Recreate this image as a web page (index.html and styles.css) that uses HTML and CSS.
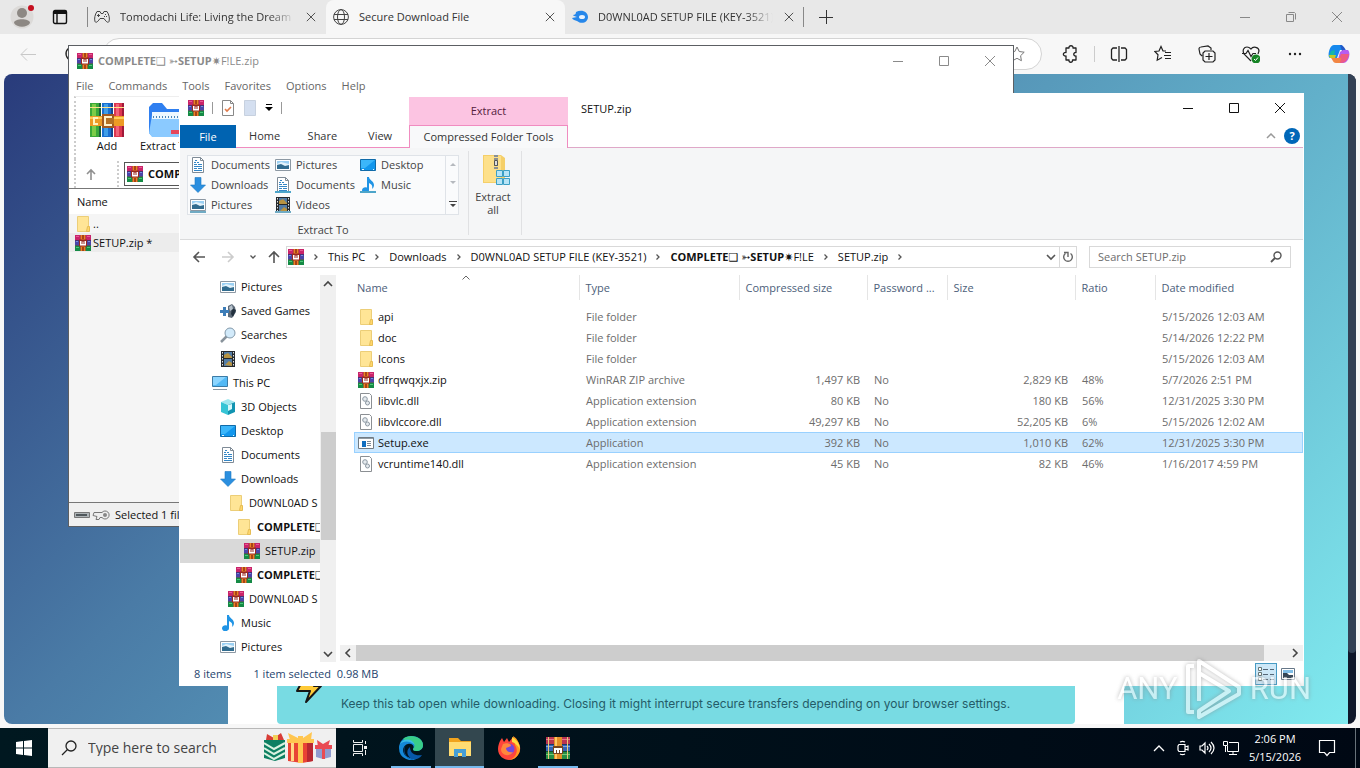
FILE: index.html
```html
<!DOCTYPE html>
<html lang="en">
<head>
<meta charset="UTF-8">
<meta name="viewport" content="width=device-width, initial-scale=1.0">
<title>Desktop</title>
<link rel="stylesheet" href="styles.css">
</head>
<body>

<!-- shared icons -->
<svg class="sprite" aria-hidden="true">
    <symbol id="winrar" viewBox="0 0 16 16">
        <path fill="#c8246a" d="M0 0h16v5H0z"/><path fill="#4a45a8" d="M0 5h16v5.500H0z"/><path fill="#158a45" d="M0 10.500h16V16H0z"/>
        <path fill="#e85a93" d="M1 1h3v1H1zM12 1h3v1h-3z"/><path fill="#7a8ee0" d="M1 6h2v1H1zM13 6h2v1h-2z"/><path fill="#4dc676" d="M1 12h3v1H1zM12 12h3v1h-3z"/>
        <path fill="#4d1838" d="M0 5h16v.5H0zM0 10h16v.5H0zM5 0h.5v16H5zM10.500 0h.5v16h-.5z"/>
        <path fill="#ee8124" d="M5.500 0h5v16h-5z"/><path fill="#a74318" d="M7 0h2v4H7zM7 12h2v4H7z"/>
        <path fill="#9a2820" d="M4 4.500h8v7H4z"/><path fill="#fff" d="M5 6h1.500v3h1V6.500h1V9h1V6H11v4.500H5z"/>
    </symbol>
    <symbol id="folder" viewBox="0 0 16 16"><path fill="#ffe596" stroke="#ecce78" d="M2.500.5h11v15h-11z"/><path fill="#ffd76c" stroke="#e6bd55" d="M12.500 10.500h2v5h-3z"/></symbol>
    <symbol id="doc" viewBox="0 0 16 16"><path fill="#fff" stroke="#7f8b96" d="M2.500.5h8l3 3v12h-11z"/><path fill="none" stroke="#7f8b96" d="M10.500.5v3h3"/><path stroke="#3386c6" d="M4 5.500h2M7 5.500h2M5 3.500h2M4 7.500h3M8 7.500h4M4 9.500h8M4 11.500h3M8 11.500h4M4 13.500h8"/></symbol>
    <symbol id="download" viewBox="0 0 16 16"><path fill="#2b8fdf" stroke="#1c78c2" stroke-width=".6" d="M5 .5h6V8h4.500L8 15.500.5 8H5z"/></symbol>
    <symbol id="picture" viewBox="0 0 16 16"><path fill="#fff" stroke="#8c98a3" d="M.5 2.500h15v11H.5z"/><path fill="#9bd0f3" d="M2 4h12v8H2z"/><path fill="#e4f3fb" d="M2 7l4-2 8 2v2H2z"/><path fill="#316c8f" d="M2 8l4-1 4 2 4-1v4H2z"/></symbol>
    <symbol id="video" viewBox="0 0 16 16"><path fill="#25292d" d="M1 0h14v16H1z"/><path fill="#527ca6" d="M4 1h8v6H4zM4 8h8v7H4z"/><path fill="#b89442" d="M4 4l4-2 4 4v1H4zM5 14l4-4 3 2v3z"/><path stroke="#dfe4e7" stroke-dasharray="1.500 1.500" d="M2.500 1v14M13.500 1v14"/></symbol>
    <symbol id="screen" viewBox="0 0 16 16"><path fill="#1297ed" stroke="#106ba9" d="M.5 2.500h15v11H.5z"/><path fill="#3bb6fa" d="M1 3h14L5 11H1z"/><path stroke="#e8f7ff" d="M2 12.500h2M13 12.500h1"/></symbol>
    <symbol id="music" viewBox="0 0 16 16"><path fill="#2094e5" d="M7 0h2c0 3 5 4 5 8 0 2-1 3-2 4 1-4-1-5-3-6v7a3.500 3 0 1 1-2-2.500z"/></symbol>
    <symbol id="games" viewBox="0 0 16 16"><path fill="#5e6b79" d="M8 3l4-2 3 3 1 5-4 6-4-1z"/><path fill="#22303e" d="M12 5l4 2-3 7-2-3z"/><path fill="#b7c2cc" d="M9 4l3-2 1 4-3 2z"/><path fill="#3d7db8" d="M3 4h3v3h3v3H6v3H3v-3H0V7h3z"/></symbol>
    <symbol id="loupe" viewBox="0 0 16 16"><path stroke="#89939c" stroke-width="2.500" d="M1 15l6-6"/><circle cx="10" cy="6" r="5" fill="#d2eafa" stroke="#8399aa"/></symbol>
    <symbol id="pc" viewBox="0 0 16 16"><path fill="#53b9f5" stroke="#3c7ba5" d="M.5 1.500h15v10H.5z"/><path fill="#8bd5ff" d="M1 2h13L4 10H1z"/><path stroke="#8998a4" d="M1 14.500h14"/></symbol>
    <symbol id="cube" viewBox="0 0 16 16"><path fill="#a1e7ef" d="M8 0l7 3-7 3-7-3z"/><path fill="#36c4d5" d="M1 3l7 3v10l-7-3z"/><path fill="#1194b1" d="M15 3L8 6v10l7-3z"/><path fill="#d7f8fa" d="M8 6l4-1v5l-4 2z"/></symbol>
    <symbol id="dll" viewBox="0 0 16 16"><path fill="#fff" stroke="#8b8f93" d="M2.500.5h9l2 2v13h-11z"/><circle cx="7" cy="6" r="2.300" fill="#e5eaee" stroke="#8c98a2"/><circle cx="9.500" cy="10" r="2" fill="#e5eaee" stroke="#8c98a2"/></symbol>
    <symbol id="exe" viewBox="0 0 16 16"><path fill="#fff" stroke="#707b84" d="M.5 2.500h15v11H.5z"/><path fill="#8f9aa3" d="M1 3h14v1H1z"/><path fill="#126fc0" d="M4 6h4v6H4z"/><path stroke="#7d8a95" d="M9 6.500h4M9 8.500h4M9 10.500h4"/></symbol>
    <symbol id="min" viewBox="0 0 12 12"><path stroke="currentColor" d="M1 6.500h10"/></symbol>
    <symbol id="max" viewBox="0 0 12 12"><path fill="none" stroke="currentColor" d="M1.500 1.500h9v9h-9z"/></symbol>
    <symbol id="close" viewBox="0 0 12 12"><path stroke="currentColor" d="M1 1l10 10M11 1L1 11"/></symbol>
    <symbol id="left" viewBox="0 0 16 16"><path fill="none" stroke="currentColor" stroke-width="1.600" d="M14 8H3m5-5L3 8l5 5"/></symbol>
    <symbol id="chev" viewBox="0 0 8 8"><path fill="none" stroke="currentColor" stroke-width="1.300" d="M2.500 1.500L5 4 2.500 6.500"/></symbol>
    <symbol id="edge" viewBox="0 0 24 24">
        <path fill="#1488d8" d="M0 12A12 12 0 0 1 12 0c8 0 12 5 12 9 0 4-3 6-7 6-2 0-3-1-3-2 2-3-1-6-5-5-5 1-7 8-2 12 4 3 9 3 13 1A12 12 0 0 1 0 12z"/>
        <path fill="#39cd88" d="M4 3c7-6 20-2 20 6 0 4-3 6-7 6-2 0-3-1-3-2 4-4-1-10-7-9-1 0-2 0-3-1z"/><path fill="#39bde5" d="M1 8C4 2 13 2 16 9 10 4 4 5 1 8z"/><path fill="#0758a9" d="M7 9c-5 5-1 14 7 15-8-5-6-11-3-13 0 7 6 9 12 8-3 5-9 5-13 3-5-3-6-9-3-13z"/>
    </symbol>
    <symbol id="books" viewBox="0 0 34 34">
        <path fill="#3aa83a" d="M0 0h11v34H0z"/><path fill="#1a6fd0" d="M12 0h11v34H12z"/><path fill="#dc3750" d="M24 0h10v34H24z"/>
        <path fill="#7ccc48" d="M2 1h4v32H2z"/><path fill="#3f9ee8" d="M14 1h4v32h-4z"/><path fill="#f2637a" d="M26 1h3v32h-3z"/>
        <path fill="#195e3c" d="M9 0h2v34H9z"/><path fill="#17458d" d="M21 0h2v34h-2z"/><path fill="#a01939" d="M32 0h2v34h-2z"/><path fill="#ffe18a" d="M0 4h11v1H0zM12 4h11v1H12zM24 4h10v1H24z"/>
        <path fill="#ed9b25" d="M0 13h34v10H0z"/><path fill="#ffce5b" d="M0 14h34v2H0z"/><path fill="#a35a20" d="M12 11h12v14H12z"/><path fill="#fff1c7" d="M14 13h8v10h-8z"/><path fill="#b57225" d="M16 15h8v6h-8z"/><path fill="none" stroke="#fff2be" stroke-width="2" d="M8 15H4v6h4"/>
    </symbol>
    <symbol id="books-flat" viewBox="0 0 24 22">
        <path fill="#b93452" d="M0 0h24v7H0z"/><path fill="#3563b5" d="M0 7.500h24v6.500H0z"/><path fill="#258f45" d="M0 14.500h24V22H0z"/>
        <path fill="#e4788c" d="M0 2h24v1H0z"/><path fill="#78a6e4" d="M0 9h24v1H0z"/><path fill="#75c978" d="M0 17h24v1H0z"/><path fill="#e8c877" d="M2 0h1v22H2zM21 0h1v22h-1z"/>
        <path fill="#e38f27" d="M8 0h8v22H8z"/><path fill="#ffc562" d="M9 0h2v22H9z"/><path fill="#754420" d="M7 9h10v8H7z"/><path fill="#fff" d="M8 11h8v5h-2v-3h-1v3h-2v-3h-1v3H8z"/>
    </symbol>
</svg>

<div class="desktop">

    <!-- browser -->
    <div class="browser">
        <div class="tabstrip">
            <button class="profile" aria-label="Profile"><svg width="24" height="24" viewBox="0 0 24 24"><circle cx="12" cy="12" r="11.500" fill="#dcdad8"/><circle cx="12" cy="8" r="5" fill="#8d8883"/><path fill="#8d8883" d="M4 18c0-5 16-5 16 0-3 5-13 5-16 0z"/><circle cx="21" cy="3" r="3" fill="#c50f1f"/></svg></button>
            <button class="workspace" aria-label="Workspaces"><svg width="16" height="16" viewBox="0 0 16 16"><path fill="none" stroke="#111" stroke-width="1.400" d="M3 1.500h10a1.500 1.500 0 0 1 1.500 1.500v10a1.500 1.500 0 0 1-1.500 1.500H3A1.500 1.500 0 0 1 1.500 13V3A1.500 1.500 0 0 1 3 1.500zM5 5v9"/><path fill="#111" d="M1.500 2h13v3h-13z"/></svg></button>
            <div class="tab first">
                <svg width="16" height="16" viewBox="0 0 16 16"><path fill="none" stroke="#444" d="M3 2.500h3l1 2h2l1-2h3c2 3 3 7 2 10-1 2-3 0-5-3H6c-2 3-4 5-5 3C0 9.500 1 5.500 3 2.500zM3 6.500h3M4.500 5v3"/><path stroke="#444" d="M11 5.500h1M12 7.500h1M10 7.500h1"/></svg>
                <span class="tab-title fade">Tomodachi Life: Living the Dream</span>
                <button class="tab-close" aria-label="Close tab"><svg width="10" height="10"><use href="#close"/></svg></button>
            </div>
            <div class="tab active">
                <svg width="16" height="16" viewBox="0 0 16 16"><g fill="none" stroke="#444"><circle cx="8" cy="8" r="7.400"/><ellipse cx="8" cy="8" rx="3.500" ry="7.400"/><path d="M1 5.500h14M1 10.500h14"/></g></svg>
                <span class="tab-title">Secure Download File</span>
                <button class="tab-close" aria-label="Close tab"><svg width="10" height="10"><use href="#close"/></svg></button>
            </div>
            <div class="tab last">
                <svg width="16" height="16" viewBox="0 0 16 16"><path fill="#2687ea" d="M4 3c6-3 12 0 12 5s-6 8-11 4C3 11 1 11 0 9l5-1C3 7 1 7 1 6c2 0 3-1 3-3z"/><ellipse cx="10" cy="8" rx="3" ry="2" fill="#e8f3ff"/></svg>
                <span class="tab-title fade">D0WNL0AD SETUP FILE (KEY-3521)</span>
                <button class="tab-close" aria-label="Close tab"><svg width="10" height="10"><use href="#close"/></svg></button>
            </div>
            <button class="new-tab" aria-label="New tab"><svg width="14" height="14" viewBox="0 0 14 14"><path stroke="#333" d="M7.500 0v14M0 7.500h14"/></svg></button>
            <div class="controls dim">
                <button aria-label="Minimize"><svg width="12" height="12"><use href="#min"/></svg></button>
                <button aria-label="Restore"><svg width="12" height="12" viewBox="0 0 12 12"><path fill="none" stroke="currentColor" d="M1.500 3.500h7v7h-7zM3.500 1.500h6l1 1v6"/></svg></button>
                <button aria-label="Close"><svg width="12" height="12"><use href="#close"/></svg></button>
            </div>
        </div>
        <div class="toolbar">
            <button class="nav-back" aria-label="Back"><svg width="18" height="18" viewBox="0 0 18 18"><path fill="none" stroke="#c8c8c8" d="M17 9.500H2m6-6l-6 6 6 6"/></svg></button>
            <button class="nav-reload" aria-label="Refresh"><svg width="18" height="18" viewBox="0 0 18 18"><path fill="none" stroke="#222" stroke-width="1.300" d="M15 5a7 7 0 1 0 1 4M15 1v4h-4"/></svg></button>
            <div class="omnibox">
                <input type="text" aria-label="Address">
                <button aria-label="Add to favorites"><svg width="16" height="16" viewBox="0 0 16 16"><path fill="none" stroke="#777" d="M8 1l2.200 4.500 5 .7-3.600 3.500.8 5L8 12.300l-4.400 2.400.8-5L.8 6.200l5-.7z"/></svg></button>
            </div>
            <div class="tools">
                <button aria-label="Extensions"><svg width="18" height="18" viewBox="0 0 18 18"><path fill="none" stroke="#222" stroke-width="1.300" stroke-linejoin="round" d="M5 3h3c-.5-3 4.500-3 4 0h3v4.500c-3-.5-3 4 0 3.500v4h-3.500c.5 3-4 3-3.500 0H5v-4c-3.500.5-3.500-4 0-3.500z"/></svg></button>
                <span class="line"></span>
                <button aria-label="Split screen"><svg width="18" height="18" viewBox="0 0 18 18"><path fill="none" stroke="#222" stroke-width="1.300" d="M7 3H3L1.500 4.500v9L3 15h4M11 3h4l1.500 1.500v9L15 15h-4M9 1v16"/></svg></button>
                <button aria-label="Favorites"><svg width="18" height="18" viewBox="0 0 18 18"><path fill="none" stroke="#222" stroke-width="1.200" d="M12 6H9L7 1.500 5 6 .8 6.500 4 9.800l-.8 5.400L8 12.500M11 7.500h6M10 10.500h7M11 13.500h6"/></svg></button>
                <button aria-label="Collections"><svg width="18" height="18" viewBox="0 0 18 18"><path fill="none" stroke="#222" stroke-width="1.200" d="M4 11L2 9 1 4c0-1 1-2 2-2l7-1 3 2v2M7 6h8l2 2v7l-2 2H7l-2-2V8zM11 8v7M7.500 11.500h7"/></svg></button>
                <button aria-label="Browser essentials"><svg width="18" height="18" viewBox="0 0 18 18"><path fill="none" stroke="#222" stroke-width="1.200" d="M9 16L2 9C0 5 2 2 5 2c2 0 3 1 4 2 2-3 8-2 8 2l-1 3M0 8.500h4l2-3 3 6 2-3h3"/><circle cx="14" cy="14" r="4.500" fill="#178526"/><path fill="none" stroke="#fff" d="M12 14l1.500 1.500L16 12.500"/></svg></button>
                <button aria-label="Settings and more"><svg width="16" height="16" viewBox="0 0 16 16"><g fill="#222"><circle cx="3" cy="8" r="1.200"/><circle cx="8" cy="8" r="1.200"/><circle cx="13" cy="8" r="1.200"/></g></svg></button>
                <button class="copilot" aria-label="Copilot"><svg width="22" height="20" viewBox="0 0 22 20"><path fill="#1689ed" d="M6 1h8l2 5h-4L9 14H2C-1 14 1 1 6 1z"/><path fill="#18b7a6" d="M3 7l4-1-1 7H1z"/><path fill="#c4c927" d="M1 11h7l-1 3H2z"/><path fill="#2459c8" d="M12 1c5 0 5 6 7 6h-5z"/><path fill="#b75cf0" d="M15 6h5c3 3 1 13-5 13H9l3-11z"/><path fill="#ed5b84" d="M13 10h8c-1 6-4 9-8 9H9z"/><path fill="#f28643" d="M7 14h6l-1 5H8c-3 0-3-3-5-5z"/></svg></button>
            </div>
        </div>
        <div class="page">
            <div class="page-body">
                <div class="card">
                    <div class="note">
                        <svg class="bolt" width="28" height="30" viewBox="0 0 28 30"><path fill="#ffca37" stroke="#161616" stroke-width="2" stroke-linejoin="round" d="M10 2h14l-5 10h7L11 28l4-11H2z"/></svg>
                        <p>Keep this tab open while downloading. Closing it might interrupt secure transfers depending on your browser settings.</p>
                    </div>
                </div>
            </div>
            <div class="page-scroll"><span></span></div>
        </div>
    </div>

    <!-- archive manager -->
    <div class="window archive">
        <div class="archive-title">
            <svg width="16" height="16"><use href="#winrar"/></svg>
            <span><b>COMPLETE❑ ➳SETUP✷</b>F!LE.zip</span>
            <div class="controls">
                <button aria-label="Minimize"><svg width="12" height="12"><use href="#min"/></svg></button>
                <button aria-label="Maximize"><svg width="12" height="12"><use href="#max"/></svg></button>
                <button aria-label="Close"><svg width="12" height="12"><use href="#close"/></svg></button>
            </div>
        </div>
        <div class="archive-menu">
            <button>File</button><button>Commands</button><button>Tools</button><button>Favorites</button><button>Options</button><button>Help</button>
        </div>
        <div class="archive-tools">
            <button><svg width="34" height="34"><use href="#books"/></svg>Add</button>
            <button><svg width="34" height="34" viewBox="0 0 34 34"><path fill="#2f7ff0" d="M0 4l4-4h9l5 6h16v28H4l-4-4z"/><path fill="#8bcaff" d="M3 12h31v22H3l-3-4z"/><path fill="#eef8ff" d="M3 9h31v7H3z"/><path stroke="#4c87b8" stroke-width="2" stroke-dasharray="1 2" d="M4 14h30"/><path fill="#e4475b" d="M22 27h12v4H22z"/></svg>Extract To</button>
        </div>
        <div class="archive-path">
            <button class="up" aria-label="Up"><svg width="12" height="12" viewBox="0 0 12 12"><path fill="none" stroke="#909090" stroke-width="1.600" d="M6 12V2M2 6l4-4 4 4"/></svg></button>
            <div class="path-box"><svg width="16" height="16"><use href="#winrar"/></svg><b>COMPLETE❑</b></div>
        </div>
        <div class="archive-list">
            <div class="archive-head">Name</div>
            <div class="archive-row"><svg width="16" height="16"><use href="#folder"/></svg>..</div>
            <div class="archive-row picked"><svg width="16" height="16"><use href="#winrar"/></svg>SETUP.zip *</div>
        </div>
        <div class="archive-status">
            <svg width="38" height="14" viewBox="0 0 38 14"><path fill="#aeb4b7" stroke="#777" d="M1.500 4.500h15v5h-15z"/><path fill="#50585c" d="M3 6h11v2H3z"/><path fill="#eee" stroke="#777" d="M21 4.500h8a4 4 0 1 1 0 5h-2l-1 2h-3l1-3-4-1z"/><circle cx="32" cy="7" r="2" fill="#888"/></svg>
            <span>Selected 1 file</span>
        </div>
    </div>

    <!-- file explorer -->
    <div class="window explorer">
        <div class="titlebar">
            <div class="quick">
                <svg width="16" height="16"><use href="#winrar"/></svg>
                <i></i>
                <button aria-label="Properties"><svg width="14" height="16" viewBox="0 0 14 16"><path fill="#fff" stroke="#888" d="M1.500.5h8l3 3v12h-11z"/><path fill="none" stroke="#888" d="M9.500.5v3h3"/><path fill="none" stroke="#e07a4a" stroke-width="1.600" d="M4 9l2 2 4-4"/></svg></button>
                <button aria-label="New folder"><svg width="14" height="16" viewBox="0 0 14 16"><path fill="#d4dff0" stroke="#c7d1df" d="M1.500.5h11v15h-11z"/></svg></button>
                <button class="more" aria-label="Customize"><svg width="8" height="8" viewBox="0 0 8 8"><path d="M1 0h6v1H1zM0 3h8L4 7z"/></svg></button>
                <i></i>
            </div>
            <div class="context">Extract</div>
            <div class="title">SETUP.zip</div>
            <div class="controls">
                <button aria-label="Minimize"><svg width="12" height="12"><use href="#min"/></svg></button>
                <button aria-label="Maximize"><svg width="12" height="12"><use href="#max"/></svg></button>
                <button aria-label="Close"><svg width="12" height="12"><use href="#close"/></svg></button>
            </div>
        </div>
        <div class="tabs">
            <div class="tabs-left">
                <button class="file">File</button>
                <button>Home</button>
                <button>Share</button>
                <button>View</button>
            </div>
            <button class="tools-tab">Compressed Folder Tools</button>
            <div class="help">
                <svg width="10" height="6" viewBox="0 0 10 6"><path fill="none" stroke="#999" stroke-width="1.500" d="M1 5l4-4 4 4"/></svg>
                <button aria-label="Help">?</button>
            </div>
        </div>
        <div class="ribbon">
            <div class="group">
                <div class="gallery">
                    <div class="places">
                        <button><svg width="16" height="16"><use href="#doc"/></svg>Documents</button>
                        <button><svg width="16" height="16"><use href="#picture"/></svg>Pictures</button>
                        <button><svg width="16" height="16"><use href="#screen"/></svg>Desktop</button>
                        <button><svg width="16" height="16"><use href="#download"/></svg>Downloads</button>
                        <button><svg width="16" height="16"><use href="#doc"/><path stroke="#4da5ca" stroke-width="2" d="M0 15h16"/></svg>Documents</button>
                        <button><svg width="16" height="16"><use href="#music"/><path stroke="#4da5ca" stroke-width="2" d="M0 15h16"/></svg>Music</button>
                        <button><svg width="16" height="16"><use href="#picture"/><path stroke="#70abc4" stroke-width="2" d="M0 15h16"/></svg>Pictures</button>
                        <button><svg width="16" height="16"><use href="#video"/><path stroke="#70abc4" stroke-width="2" d="M0 15h16"/></svg>Videos</button>
                    </div>
                    <div class="spinner">
                        <svg width="6" height="4" viewBox="0 0 6 4"><path fill="#b5b9be" d="M0 4l3-3 3 3z"/></svg>
                        <svg width="6" height="4" viewBox="0 0 6 4"><path fill="#b5b9be" d="M0 0h6L3 3z"/></svg>
                        <svg width="8" height="8" viewBox="0 0 8 8"><path fill="#444" d="M0 1h8v1H0zM1 4h6L4 7z"/></svg>
                    </div>
                </div>
                <div class="group-name">Extract To</div>
            </div>
            <button class="extract-all">
                <svg width="28" height="32" viewBox="0 0 28 32"><path fill="#f5cf69" d="M0 1h18l4 3v25H0z"/><path fill="#fde08a" d="M1 2h17v26H1z"/><path stroke="#8b9093" stroke-width="4" stroke-dasharray="2 1" d="M13 1v15"/><path fill="#ddd" stroke="#555" d="M11.500 6.500h3v5h-3z"/><path fill="#b7e4f6" stroke="#3c9fc5" d="M13.500 16.500h6v6h-6zM20.500 16.500h6v6h-6zM13.500 24.500h6v6h-6zM20.500 24.500h6v6h-6z"/></svg>
                Extract<br>all
            </button>
        </div>
        <div class="navbar">
            <div class="arrows">
                <button aria-label="Back"><svg width="16" height="16"><use href="#left"/></svg></button>
                <button class="off" aria-label="Forward"><svg class="flip" width="16" height="16"><use href="#left"/></svg></button>
                <button class="small" aria-label="Recent locations"><svg class="down" width="8" height="8"><use href="#chev"/></svg></button>
                <button class="small" aria-label="Up"><svg class="down" width="16" height="16"><use href="#left"/></svg></button>
            </div>
            <div class="crumbs">
                <svg width="16" height="16"><use href="#winrar"/></svg>
                <svg class="sep" width="8" height="8"><use href="#chev"/></svg>
                <a href="#">This PC</a>
                <svg class="sep" width="8" height="8"><use href="#chev"/></svg>
                <a href="#">Downloads</a>
                <svg class="sep" width="8" height="8"><use href="#chev"/></svg>
                <a href="#">D0WNL0AD SETUP FILE (KEY-3521)</a>
                <svg class="sep" width="8" height="8"><use href="#chev"/></svg>
                <a href="#"><b>COMPLETE❑ ➳SETUP✷</b>F!LE</a>
                <svg class="sep" width="8" height="8"><use href="#chev"/></svg>
                <a href="#">SETUP.zip</a>
                <svg class="sep" width="8" height="8"><use href="#chev"/></svg>
                <div class="crumb-end">
                    <button aria-label="Previous locations"><svg width="10" height="8" viewBox="0 0 10 8"><path fill="none" stroke="#555" stroke-width="1.600" d="M1 2l4 4 4-4"/></svg></button>
                    <button class="reload" aria-label="Refresh"><svg width="12" height="12" viewBox="0 0 12 12"><path fill="none" stroke="#666" stroke-width="1.400" d="M8.500 2.500a4.300 4.300 0 1 1-5 0M2 1.500h4V6"/></svg></button>
                </div>
            </div>
            <div class="search">
                <input type="text" placeholder="Search SETUP.zip" aria-label="Search SETUP.zip">
                <svg width="12" height="12" viewBox="0 0 12 12"><circle cx="7.500" cy="4.500" r="3.500" fill="none" stroke="#555" stroke-width="1.400"/><path stroke="#555" stroke-width="1.800" d="M5 7l-4 4"/></svg>
            </div>
        </div>
        <div class="main">
            <nav class="tree">
                <a href="#" class="level1"><svg width="16" height="16"><use href="#picture"/></svg>Pictures</a>
                <a href="#" class="level1"><svg width="16" height="16"><use href="#games"/></svg>Saved Games</a>
                <a href="#" class="level1"><svg width="16" height="16"><use href="#loupe"/></svg>Searches</a>
                <a href="#" class="level1"><svg width="16" height="16"><use href="#video"/></svg>Videos</a>
                <a href="#" class="level0"><svg width="16" height="16"><use href="#pc"/></svg>This PC</a>
                <a href="#" class="level1"><svg width="16" height="16"><use href="#cube"/></svg>3D Objects</a>
                <a href="#" class="level1"><svg width="16" height="16"><use href="#screen"/></svg>Desktop</a>
                <a href="#" class="level1"><svg width="16" height="16"><use href="#doc"/></svg>Documents</a>
                <a href="#" class="level1"><svg width="16" height="16"><use href="#download"/></svg>Downloads</a>
                <a href="#" class="level2"><svg width="16" height="16"><use href="#folder"/></svg>D0WNL0AD S</a>
                <a href="#" class="level3"><svg width="16" height="16"><use href="#folder"/></svg><b>COMPLETE❑</b></a>
                <a href="#" class="level4 current"><svg width="16" height="16"><use href="#winrar"/></svg>SETUP.zip</a>
                <a href="#" class="level3"><svg width="16" height="16"><use href="#winrar"/></svg><b>COMPLETE❑</b></a>
                <a href="#" class="level2"><svg width="16" height="16"><use href="#winrar"/></svg>D0WNL0AD S</a>
                <a href="#" class="level1"><svg width="16" height="16"><use href="#music"/></svg>Music</a>
                <a href="#" class="level1"><svg width="16" height="16"><use href="#picture"/></svg>Pictures</a>
            </nav>
            <div class="vscroll">
                <svg width="10" height="16" viewBox="0 0 10 16"><path fill="none" stroke="#444" stroke-width="1.600" d="M1 11l4-4 4 4"/></svg>
                <span></span>
                <svg width="10" height="16" viewBox="0 0 10 16"><path fill="none" stroke="#444" stroke-width="1.600" d="M1 6l4 4 4-4"/></svg>
            </div>
            <div class="files">
                <table>
                    <colgroup><col class="c-name"><col class="c-type"><col class="c-size"><col class="c-short"><col class="c-size"><col class="c-short"><col></colgroup>
                    <thead>
                        <tr><th>Name<svg class="sort" width="8" height="5" viewBox="0 0 8 5"><path fill="none" stroke="#666" d="M.5 4.500L4 1l3.500 3.500"/></svg></th><th>Type</th><th>Compressed size</th><th>Password ...</th><th>Size</th><th>Ratio</th><th>Date modified</th></tr>
                    </thead>
                    <tbody>
                        <tr><td><svg width="16" height="16"><use href="#folder"/></svg>api</td><td>File folder</td><td></td><td></td><td></td><td></td><td>5/15/2026 12:03 AM</td></tr>
                        <tr><td><svg width="16" height="16"><use href="#folder"/></svg>doc</td><td>File folder</td><td></td><td></td><td></td><td></td><td>5/14/2026 12:22 PM</td></tr>
                        <tr><td><svg width="16" height="16"><use href="#folder"/></svg>Icons</td><td>File folder</td><td></td><td></td><td></td><td></td><td>5/15/2026 12:03 AM</td></tr>
                        <tr><td><svg width="16" height="16"><use href="#winrar"/></svg>dfrqwqxjx.zip</td><td>WinRAR ZIP archive</td><td class="num">1,497 KB</td><td>No</td><td class="num">2,829 KB</td><td>48%</td><td>5/7/2026 2:51 PM</td></tr>
                        <tr><td><svg width="16" height="16"><use href="#dll"/></svg>libvlc.dll</td><td>Application extension</td><td class="num">80 KB</td><td>No</td><td class="num">180 KB</td><td>56%</td><td>12/31/2025 3:30 PM</td></tr>
                        <tr><td><svg width="16" height="16"><use href="#dll"/></svg>libvlccore.dll</td><td>Application extension</td><td class="num">49,297 KB</td><td>No</td><td class="num">52,205 KB</td><td>6%</td><td>5/15/2026 12:02 AM</td></tr>
                        <tr class="selected"><td><svg width="16" height="16"><use href="#exe"/></svg>Setup.exe</td><td>Application</td><td class="num">392 KB</td><td>No</td><td class="num">1,010 KB</td><td>62%</td><td>12/31/2025 3:30 PM</td></tr>
                        <tr><td><svg width="16" height="16"><use href="#dll"/></svg>vcruntime140.dll</td><td>Application extension</td><td class="num">45 KB</td><td>No</td><td class="num">82 KB</td><td>46%</td><td>1/16/2017 4:59 PM</td></tr>
                    </tbody>
                </table>
                <div class="hscroll">
                    <svg width="16" height="10" viewBox="0 0 16 10"><path fill="none" stroke="#444" stroke-width="1.600" d="M10 1L6 5l4 4"/></svg>
                    <span></span>
                    <svg width="16" height="10" viewBox="0 0 16 10"><path fill="none" stroke="#444" stroke-width="1.600" d="M6 1l4 4-4 4"/></svg>
                </div>
            </div>
        </div>
        <div class="status">
            <span>8 items</span>
            <span>1 item selected&nbsp; 0.98 MB</span>
            <div class="views">
                <button class="on" aria-label="Details"><svg width="18" height="14" viewBox="0 0 18 14"><path fill="#fff" stroke="#677" d="M1.500.5h3v3h-3zM1.500 5.500h3v3h-3zM1.500 10.500h3v3h-3z"/><path stroke="#567" d="M6 2.500h5M6 7.500h5M6 12.500h5M13 2.500h4M13 7.500h4M13 12.500h4"/></svg></button>
                <button aria-label="Large icons"><svg width="14" height="12" viewBox="0 0 14 12"><path fill="#fff" stroke="#678" d="M.5.5h13v11H.5z"/><path fill="#7fbde6" d="M2 2h10v3H2z"/><path fill="#345" d="M2 5h4l2 2h4v3H2z"/></svg></button>
            </div>
        </div>
    </div>

    <div class="watermark">
        <span>ANY</span>
        <svg width="58" height="62" viewBox="0 0 58 62"><path fill="none" stroke="#fff" stroke-width="4" stroke-linejoin="round" d="M14 43V3l40 26v7L14 59v-6l30-20-30-18M9 8H3v46h6"/></svg>
        <span>RUN</span>
    </div>
</div>

<div class="taskbar">
    <button class="start" aria-label="Start"><svg width="16" height="16" viewBox="0 0 16 16"><path fill="#fff" d="M0 2l7-1v6.500H0zM8 1l8-1v7.500H8zM0 8.500h7V15l-7-1zM8 8.500h8V16l-8-1z"/></svg></button>
    <label class="task-search">
        <svg width="16" height="16" viewBox="0 0 16 16"><g fill="none" stroke="#222" stroke-width="1.300"><circle cx="10" cy="6" r="5"/><path d="M6.500 9.500L1 15"/></g></svg>
        <input type="text" placeholder="Type here to search">
        <svg width="68" height="34" viewBox="0 0 68 34"><path fill="#0d7f62" d="M0 9h21v18l-10 3-11-3z"/><path fill="none" stroke="#d9f1df" stroke-width="2" d="M0 12l10 6 11-6M0 17l10 6 11-6M0 22l10 6 11-6"/><path fill="#d83d37" d="M2 9l1-6 7 4 7-5 3 7z"/><path fill="#f2cf57" d="M9 4h5v5H9z"/><path fill="#e94334" d="M24 8h25v22l-11 2-14-2z"/><path fill="#ffc650" d="M34 5h5v27h-5zM23 8h27v4H23zM24 2l10 5h5l9-6-1 8H26z"/><path fill="#b82832" d="M43 12h6v18l-6 1z"/><path fill="#ffd785" d="M27 12h3v18h-3z"/><path fill="#8f9bd0" d="M52 16h15v10l-8 2-7-2z"/><path fill="#e94a53" d="M51 14h17v4H51zM53 9l6 4 7-4-2 7H54zM58 14h3v14h-3z"/></svg>
    </label>
    <button class="task-view" aria-label="Task View"><svg width="16" height="16" viewBox="0 0 16 16"><path fill="none" stroke="#eee" d="M1.500 4.500h9v7h-9zM1.500 0v2.500h9V0M1.500 16v-2.500h9V16M13.500 1v3M13.500 10v5"/><path fill="#eee" d="M12 6h3v3h-3z"/></svg></button>
    <button class="app running" aria-label="Microsoft Edge"><svg width="24" height="24"><use href="#edge"/></svg></button>
    <button class="app current" aria-label="File Explorer"><svg width="22" height="20" viewBox="0 0 22 20"><path fill="#f0a31d" d="M0 1h9l3 3h10v15H0z"/><path fill="#ffdc72" d="M0 5h22v14H0z"/><path fill="#459ed5" d="M5 12h12v8h-4v-4H9v4H5z"/></svg></button>
    <button class="app" aria-label="Firefox"><svg width="24" height="24" viewBox="0 0 24 24"><path fill="#ff453a" d="M3 5l2-3 2 4 3-4 2 4 4-5c4 3 8 7 7 13C22 20 17 24 12 24S1 20 1 13c0-3 1-6 2-8z"/><path fill="#ff9a1f" d="M16 0c5 3 7 8 7 14-1 6-6 10-11 10 7-2 10-9 6-15z"/><path fill="#ffdc41" d="M15 1c6 4 8 8 8 13-1-4-5-7-8-8z"/><circle cx="12" cy="13" r="5.500" fill="#7547dc"/><path fill="#ff873c" d="M6 8c4-2 8 0 8 2l-5 2c0 3 3 5 7 4-3 5-12 4-12-3z"/></svg></button>
    <button class="app running" aria-label="WinRAR"><svg width="24" height="22"><use href="#books-flat"/></svg></button>
    <div class="tray">
        <button aria-label="Show hidden icons"><svg width="12" height="8" viewBox="0 0 12 8"><path fill="none" stroke="#fff" stroke-width="1.300" d="M1 7l5-5 5 5"/></svg></button>
        <button aria-label="Meet Now"><svg width="14" height="16" viewBox="0 0 14 16"><path fill="none" stroke="#fff" stroke-width="1.200" d="M3 4.500h6v7H3L2 10V6zM9 7l3-1v4L9 9M4 2c2-1 3-1 5 0M4 14c2 1 3 1 5 0"/></svg></button>
        <button aria-label="Volume"><svg width="16" height="14" viewBox="0 0 16 14"><path fill="none" stroke="#fff" stroke-width="1.200" d="M1 5h2l3-3v10L3 9H1zM8 5q2 2 0 4M10 3q4 4 0 8M12 1q6 6 0 12"/></svg></button>
        <button aria-label="Network"><svg width="16" height="16" viewBox="0 0 16 16"><path fill="none" stroke="#fff" d="M6 2.500h9.500v9H4.500V6M.5 1.500h4v4h-4zM2.500 5.500V12M10 12v2.500M6 14.500h8"/></svg></button>
        <div class="clock"><span>2:06 PM</span><span>5/15/2026</span></div>
        <button class="notify" aria-label="Notifications"><svg width="18" height="18" viewBox="0 0 18 18"><path fill="none" stroke="#fff" stroke-width="1.200" d="M1.500 1.500h15v12h-5L9 16.500l-2.500-3h-5z"/></svg></button>
        <span class="peek"></span>
    </div>
</div>

</body>
</html>
```

FILE: styles.css
```css
* {
    box-sizing: border-box;
}

body {
    margin: 0;
    height: 100vh;
    display: flex;
    flex-direction: column;
    overflow: hidden;
    font-family: "Open Sans", "DejaVu Sans", sans-serif;
    font-size: 11px;
    line-height: 16px;
    color: #111;
    background: #f0eeee;
}

button,
input {
    font: inherit;
    color: inherit;
    border: 0;
    padding: 0;
    margin: 0;
    background: none;
}

input {
    min-width: 0;
    flex: 1;
    outline: none;
}

button {
    display: flex;
    align-items: center;
    justify-content: center;
}

a {
    color: inherit;
    text-decoration: none;
    white-space: nowrap;
}

svg {
    flex: none;
}

.sprite {
    position: absolute;
    width: 0;
    height: 0;
}

.desktop {
    position: relative;
    flex: 1;
    min-height: 0;
}

.controls {
    display: flex;
    margin-left: auto;
}

.controls button {
    width: 46px;
    height: 30px;
}

.dim {
    color: #888;
}

/* browser */
.browser {
    height: 100%;
    display: flex;
    flex-direction: column;
    background: #f7f7f7;
    padding-bottom: 4px;
}

.tabstrip {
    height: 34px;
    display: flex;
    align-items: center;
    background: #e8e8e8;
}

.profile {
    width: 44px;
}

.workspace {
    width: 32px;
    margin-right: 11px;
}

.tab {
    width: 239px;
    height: 34px;
    padding: 0 9px 0 7px;
    display: flex;
    align-items: center;
    gap: 10px;
    color: #333;
}

.tab.first,
.tab.last {
    background: linear-gradient(#888, #888) no-repeat left center / 1px 20px;
}

.tab.last {
    background-position: right center;
}

.tab.active {
    background: #f7f7f7;
    border-radius: 8px 8px 0 0;
}

.tab-title {
    flex: 1;
    overflow: hidden;
    white-space: nowrap;
}

.fade {
    mask-image: linear-gradient(to right, #000 85%, transparent);
}

.tab-close {
    width: 12px;
    height: 16px;
}

.new-tab {
    width: 44px;
}

.toolbar {
    height: 40px;
    display: flex;
    align-items: center;
}

.nav-back {
    width: 56px;
}

.nav-reload {
    width: 34px;
}

.omnibox {
    flex: 1;
    height: 32px;
    margin-left: 13px;
    margin-right: 6px;
    padding: 0 16px;
    display: flex;
    align-items: center;
    background: #fff;
    border: 1px solid #d4d4d4;
    border-radius: 16px;
}

.tools {
    display: flex;
    align-items: center;
}

.tools button {
    width: 44px;
}

.tools .copilot {
    width: 43px;
}

.line {
    width: 1px;
    height: 16px;
    margin: 0 2px;
    background: #ccc;
}

.page {
    flex: 1;
    min-height: 0;
    margin: 0 4px;
    display: flex;
    border-radius: 8px;
    overflow: hidden;
}

.page-body {
    flex: 1;
    display: flex;
    justify-content: center;
    background: linear-gradient(135deg, #293b7b, #4a7ba6 33%, #62b0ca 67%, #80eaef);
}

.card {
    width: 896px;
    padding: 0 49px;
    display: flex;
    align-items: flex-end;
    background: #fff;
    margin-top: 100px;
}

.note {
    flex: 1;
    height: 120px;
    padding: 0 16px 8px 18px;
    display: flex;
    align-items: flex-end;
    gap: 18px;
    background: #78dbe3;
    border-radius: 4px;
    font-family: Inter, sans-serif;
    font-size: 12px;
    line-height: 24px;
    color: #245b68;
}

.note p {
    margin: 0;
}

.bolt {
    margin-bottom: 12px;
}

.page-scroll {
    width: 8px;
    background: #0f172a;
}

.page-scroll span {
    display: block;
    height: 89%;
    background: #334155;
    border-radius: 0 0 4px 4px;
}

/* windows */
.window {
    position: absolute;
    display: flex;
    flex-direction: column;
    background: #fff;
}

.archive {
    left: 68px;
    top: 45px;
    right: 346px;
    height: 482px;
    border: 1px solid #5c5f63;
    color: #111;
}

.archive-title {
    height: 29px;
    padding-left: 8px;
    display: flex;
    align-items: center;
    gap: 5px;
    color: #8a8a8a;
}

.archive-menu {
    height: 21px;
    padding-left: 7px;
    display: flex;
    align-items: center;
    gap: 15px;
    color: #666;
}

.archive-tools {
    height: 63px;
    margin-left: 5px;
    padding-left: 10px;
    display: flex;
    gap: 12px;
    align-items: center;
    border-left: 2px dotted #ccc;
    border-top: 1px solid #eee;
}

.archive-tools button {
    min-width: 42px;
    flex-direction: column;
    white-space: nowrap;
    gap: 1px;
}

.archive-path {
    height: 29px;
    margin-left: 5px;
    display: flex;
    align-items: center;
    border-left: 2px dotted #ccc;
}

.archive-path .up {
    width: 43px;
    height: 26px;
    padding-right: 12px;
    border-right: 2px dotted #ccc;
}

.path-box {
    flex: 1;
    height: 24px;
    margin-left: 5px;
    padding-left: 2px;
    display: flex;
    align-items: center;
    gap: 5px;
    border: 1px solid #555;
}

.archive-list {
    flex: 1;
    background: #f5f5f5;
    border-top: 1px solid #777;
    border-bottom: 1px solid #777;
}

.archive-head {
    height: 25px;
    padding: 5px 8px;
    background: #fff;
}

.archive-row {
    height: 19px;
    padding-left: 6px;
    display: flex;
    align-items: center;
    gap: 2px;
}

.picked {
    background: #ececec;
}

.archive-status {
    height: 23px;
    padding-left: 4px;
    display: flex;
    align-items: center;
    background: #f0f0f0;
}

.archive-status span {
    margin-left: 4px;
}

/* explorer */
.explorer {
    left: 179px;
    top: 93px;
    right: 56px;
    bottom: 42px;
    border: solid #fff;
    border-width: 0 1px;
}

.titlebar {
    height: 32px;
    display: flex;
}

.quick {
    width: 229px;
    height: 30px;
    padding-left: 8px;
    display: flex;
    align-items: center;
    gap: 8px;
}

.quick i {
    width: 1px;
    height: 12px;
    background: #999;
}

.quick button {
    min-width: 14px;
}

.quick .more {
    min-width: 8px;
}

.context {
    width: 159px;
    margin-top: 4px;
    line-height: 28px;
    text-align: center;
    color: #54203c;
    background: #fcc4e2;
}

.title {
    margin-left: 13px;
    line-height: 32px;
}

.tabs {
    height: 23px;
    display: flex;
    color: #333;
}

.tabs-left {
    width: 229px;
    display: flex;
    border-bottom: 1px solid #f08cc0;
}

.tabs-left button {
    width: 58px;
}

.tabs-left .file {
    width: 56px;
    height: 23px;
    color: #fff;
    background: #0063b1;
}

.tools-tab {
    width: 159px;
    background: #f8f9fa;
    border: solid #f08cc0;
    border-width: 1px 1px 0;
}

.help {
    flex: 1;
    display: flex;
    align-items: center;
    justify-content: flex-end;
    gap: 8px;
    padding-right: 3px;
    border-bottom: 1px solid #dfa8c8;
}

.help button {
    width: 16px;
    height: 16px;
    border-radius: 50%;
    background: #0067b8;
    color: #fff;
    font-weight: bold;
}

.ribbon {
    height: 92px;
    display: flex;
    padding: 3px 0 4px;
    background: #f5f6f7;
    border-bottom: 1px solid #dadbdc;
    color: #444;
}

.group {
    padding: 4px 9px 0 7px;
    border-right: 1px solid #e0e1e3;
}

.gallery {
    width: 272px;
    height: 60px;
    display: flex;
    box-shadow: inset 0 0 0 1px #dfe3e8;
    background: #fafbfc;
}

.places {
    flex: 1;
    display: grid;
    grid-template-columns: repeat(3, 85px);
    grid-auto-rows: 20px;
    padding-left: 3px;
}

.places button {
    justify-content: flex-start;
    gap: 5px;
}

.spinner {
    width: 15px;
    display: flex;
    flex-direction: column;
    align-items: center;
    justify-content: space-around;
    border-left: 1px solid #dfe3e8;
}

.group-name {
    margin-top: 7px;
    text-align: center;
}

.extract-all {
    width: 53px;
    padding: 3px 4px 0 0;
    flex-direction: column;
    justify-content: flex-start;
    line-height: 13px;
    border-right: 1px solid #e0e1e3;
}

.extract-all svg {
    margin: 0 0 4px 8px;
}

.navbar {
    height: 35px;
    padding: 6px 12px 7px 11px;
    display: flex;
}

.arrows {
    width: 95px;
    display: flex;
    align-items: center;
    gap: 13px;
    color: #555;
}

.arrows .small {
    width: 8px;
}

.arrows .off {
    color: #ccc;
}

.flip {
    transform: scaleX(-1);
}

.down {
    transform: rotate(90deg);
}

.crumbs {
    flex: 1;
    height: 22px;
    margin-right: 12px;
    padding-left: 1px;
    display: flex;
    align-items: center;
    gap: 8px;
    border: 1px solid #d9d9d9;
}

.sep {
    color: #555;
}

.crumb-end {
    height: 20px;
    margin-left: auto;
    display: flex;
    gap: 3px;
}

.reload {
    width: 17px;
    border-left: 1px solid #d9d9d9;
}

.search {
    width: 202px;
    height: 22px;
    padding: 0 8px;
    display: flex;
    align-items: center;
    border: 1px solid #d9d9d9;
}

.search input::placeholder {
    color: #6d6d6d;
    opacity: 1;
}

.main {
    flex: 1;
    min-height: 0;
    display: flex;
}

.tree {
    width: 140px;
    overflow: hidden;
}

.tree a {
    height: 24px;
    display: flex;
    align-items: center;
    gap: 5px;
}

.level0 {
    padding-left: 32px;
}

.level1 {
    padding-left: 40px;
}

.level2 {
    padding-left: 48px;
}

.level3 {
    padding-left: 56px;
}

.level4 {
    padding-left: 64px;
}

.tree .current {
    background: #d9d9d9;
}

.vscroll {
    width: 16px;
    display: flex;
    flex-direction: column;
    align-items: center;
    background: #f0f0f0;
}

.vscroll span {
    width: 15px;
    height: 108px;
    margin: 141px 0 auto;
    background: #cdcdcd;
}

.files {
    flex: 1;
    min-width: 0;
    margin-left: 4px;
    display: flex;
    flex-direction: column;
    justify-content: space-between;
}

table {
    margin-left: 14px;
    table-layout: fixed;
    border-collapse: collapse;
    color: #6d6d6d;
}

.c-name {
    width: 225px;
}

.c-type {
    width: 160px;
}

.c-size {
    width: 128px;
}

.c-short {
    width: 80px;
}

th {
    position: relative;
    height: 25px;
    padding: 0 6px;
    font-weight: normal;
    text-align: left;
    white-space: nowrap;
    color: #4c607a;
    border-right: 1px solid #e5e5e5;
}

th:first-child {
    padding-left: 3px;
}

th:last-child {
    border-right: 0;
}

.sort {
    position: absolute;
    top: 0;
    left: 48%;
}

tbody::before {
    content: "";
    display: block;
    height: 6px;
}

td {
    height: 21px;
    padding: 0 7px;
    white-space: nowrap;
}

td:first-child {
    padding-left: 4px;
    color: #111;
}

td svg {
    margin-right: 4px;
    vertical-align: -4px;
}

.num {
    text-align: right;
}

.selected {
    background: #cce8ff;
    outline: 1px solid #99d1ff;
    outline-offset: -1px;
}

.hscroll {
    height: 16px;
    margin-bottom: 1px;
    display: flex;
    align-items: center;
    background: #f0f0f0;
}

.hscroll span {
    flex: 1;
    height: 16px;
    margin-right: 23px;
    background: #cdcdcd;
}

.status {
    height: 24px;
    padding: 0 4px 0 14px;
    display: flex;
    align-items: center;
    gap: 22px;
    color: #26446e;
}

.views {
    margin-left: auto;
    display: flex;
}

.views button {
    width: 22px;
    height: 22px;
}

.views .on {
    background: #cde8f8;
    border: 1px solid #489bc4;
}

.watermark {
    position: absolute;
    right: 49px;
    bottom: 8px;
    display: flex;
    align-items: center;
    gap: 7px;
    color: #fff;
    font-family: Roboto, sans-serif;
    font-size: 31px;
    line-height: 62px;
    opacity: 0.6;
    filter: drop-shadow(0 0 2px #888);
    pointer-events: none;
}

/* taskbar */
.taskbar {
    height: 40px;
    display: flex;
    color: #fff;
    background: linear-gradient(to right, #001820, #000814);
}

.start {
    width: 48px;
}

.task-search {
    width: 288px;
    padding: 0 4px 0 13px;
    display: flex;
    align-items: center;
    gap: 11px;
    font-size: 14px;
    color: #333;
    background: #f0f0f0;
    border: solid #b8b8b8;
    border-width: 1px 0;
}

.task-search input::placeholder {
    color: #444;
    opacity: 1;
}

.task-view {
    width: 48px;
    margin-right: 2px;
}

.app {
    width: 49px;
}

.running {
    background: linear-gradient(#76b9ed, #76b9ed) no-repeat center bottom / 40px 2px;
}

.app.current {
    background: #33474f;
    border-bottom: 2px solid #76b9ed;
}

.tray {
    margin-left: auto;
    display: flex;
}

.tray button {
    width: 24px;
}

.clock {
    width: 64px;
    padding-top: 2px;
    display: flex;
    flex-direction: column;
    align-items: center;
    line-height: 18px;
}

.tray .notify {
    width: 40px;
}

.peek {
    width: 5px;
    margin-left: 8px;
    border-left: 1px solid #68727a;
}
```
